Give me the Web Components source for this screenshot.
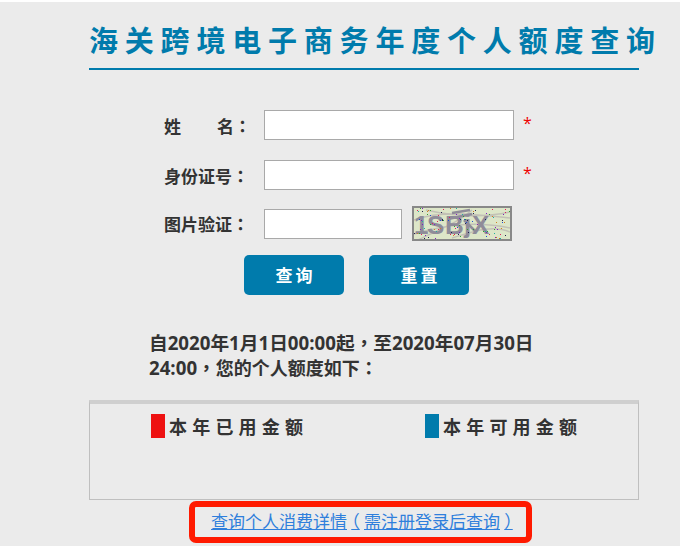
<!DOCTYPE html>
<html lang="zh-CN">
<head>
<meta charset="utf-8">
<title>海关跨境电子商务年度个人额度查询</title>
<style>
  html, body { margin: 0; background: #fff; }
  body { font-family: "Open Sans", "Noto Sans CJK SC", sans-serif; overflow: hidden; text-spacing-trim: space-all; }
  /* centred full-width punctuation */
  .p { font-family: "Noto Sans CJK TC", sans-serif; line-height: 0; }
  .paren { font-feature-settings: "halt"; padding: 0 4.25px; }
</style>
</head>
<body>
<quota-page>
  <page-title>海关跨境电子商务年度个人额度查询</page-title>
  <form-row style="margin-top: 40px">
    <span slot="label">姓<span style="letter-spacing: 1px">&emsp;&emsp;</span>名<span class="p" lang="zh-TW">：</span></span>
    <input-box width="250"></input-box>
    <span slot="mark">*</span>
  </form-row>
  <form-row style="margin-top: 20px">
    <span slot="label">身份证号<span class="p" lang="zh-TW">：</span></span>
    <input-box width="250"></input-box>
    <span slot="mark">*</span>
  </form-row>
  <form-row style="margin-top: 16px">
    <span slot="label">图片验证<span class="p" lang="zh-TW">：</span></span>
    <input-box width="138"></input-box>
    <captcha-image></captcha-image>
  </form-row>
  <button-row>
    <action-button>查询</action-button>
    <action-button>重置</action-button>
  </button-row>
  <date-note>自2020年1月1日00:00起<span class="p" lang="zh-TW">，</span>至2020年07月30日<br>24:00<span class="p" lang="zh-TW">，</span><span style="font-size: 18px">您的个人额度如下<span class="p" lang="zh-TW">：</span></span></date-note>
  <legend-panel>
    <legend-item color="#ee1111">本年已用金额</legend-item>
    <legend-item color="#007bac">本年可用金额</legend-item>
  </legend-panel>
  <detail-link>查询个人消费详情<span class="p paren" lang="zh-TW">（</span>需注册登录后查询<span class="p paren" lang="zh-TW">）</span></detail-link>
</quota-page>

<script>
const define = (name, css, html) => {
  const template = document.createElement('template');
  template.innerHTML = `<style>*{box-sizing:border-box} :host{box-sizing:border-box}${css}</style>${html}`;
  customElements.define(name, class extends HTMLElement {
    constructor() {
      super();
      this.attachShadow({ mode: 'open' });
      this.shadowRoot.appendChild(template.content.cloneNode(true));
    }
  });
};

define('quota-page', `
  :host { display: block; width: 680px; height: 544px; margin-top: 2px; background: #ebebeb; overflow: hidden; color: #333; }
`, `<slot></slot>`);

define('page-title', `
  :host { display: block; width: 550px; height: 68px; margin-left: 89px; border-bottom: 2px solid #007bac;
    padding-top: 19px; font-size: 29px; font-weight: 700; line-height: 40px; letter-spacing: 6.8px;
    color: #007bac; white-space: nowrap; }
`, `<slot></slot>`);

define('form-row', `
  :host { display: flex; align-items: center; padding-left: 164px; }
  #label { width: 100px; font-size: 17px; font-weight: 700; color: #333; white-space: nowrap; }
  #mark { margin-left: 9px; color: #e00; font-size: 16px; margin-top: -4px; }
`, `<span id="label"><slot name="label"></slot></span><slot></slot><span id="mark"><slot name="mark"></slot></span>`);

define('input-box', `
  :host { display: block; height: 30px; background: #fff; border: 1px solid #a9a9a9; }
`, ``);
customElements.whenDefined('input-box').then(() => {
  document.querySelectorAll('input-box').forEach(el => { el.style.width = el.getAttribute('width') + 'px'; });
});

define('captcha-image', `
  :host { display: block; width: 100px; height: 35px; margin-left: 10px; }
  svg { display: block; overflow: visible; }
  text { font: 700 26px "Liberation Sans", sans-serif; fill: #8f8c99; }
`, `<svg width="100" height="35" viewBox="0 0 100 35">
  <rect width="100" height="35" fill="#dde6c8"/>
  <g stroke="#c2c1b6" stroke-width="1.5" fill="none">
    <path d="M2 14C30 4 60 8 98 12M2 28C30 20 60 14 98 22M6 34C30 22 44 18 60 4M40 32C60 26 80 18 98 26M14 4C40 10 70 12 98 6"/>
  </g>
  <text x="2" y="28">1</text>
  <text x="15" y="28">S</text>
  <text x="33" y="28">B</text>
  <text x="52" y="27">j</text>
  <text x="60" y="28">X</text>
  <path d="M36 13L60 8M40 7L58 4M52 14L64 26" stroke="#8f8c99" stroke-width="2.5" fill="none"/>
  <g id="dots"></g>
  <rect x="1" y="1" width="98" height="33" fill="none" stroke="#888" stroke-width="2"/>
</svg>`);

define('button-row', `
  :host { display: flex; gap: 25px; margin-top: 14px; padding-left: 244px; }
`, `<slot></slot>`);

define('action-button', `
  :host { display: flex; align-items: center; justify-content: center; width: 100px; height: 40px; padding: 0 0 2px 3px;
    background: #007bac; border-radius: 5px; color: #fff; font-size: 17px; font-weight: 700; letter-spacing: 3px; }
`, `<slot></slot>`);

define('date-note', `
  :host { display: block; width: 392px; height: 52px; margin: 35px 0 0 149px; font-size: 18.7px; font-weight: 700; line-height: 25px; color: #333; }
`, `<slot></slot>`);

define('legend-panel', `
  :host { display: flex; width: 550px; height: 100px; margin: 18px 0 0 89px; border: 1px solid #bfbfbf; border-top: 4px solid #cfcfcf; padding: 10px 0 0 61px; }
`, `<slot></slot>`);

define('legend-item', `
  :host { display: flex; flex: none; align-items: center; width: 274px; height: 24px; font-size: 18px; font-weight: 700; letter-spacing: 5.2px; color: #333; white-space: nowrap; }
  i { display: block; width: 14px; height: 24px; margin-right: 4px; background: var(--swatch); }
`, `<i></i><slot></slot>`);
customElements.whenDefined('legend-item').then(() => {
  document.querySelectorAll('legend-item').forEach(el => el.style.setProperty('--swatch', el.getAttribute('color')));
});

define('detail-link', `
  :host { display: block; width: 343px; height: 42px; margin: 1px 0 0 189px; border: 6px solid #ff1a00; border-radius: 7px;
    padding-left: 16px; font-size: 17px; line-height: 30px; white-space: nowrap; }
  a { color: #2f7fdc; text-decoration: underline; }
`, `<a href="#"><slot></slot></a>`);

// captcha noise
let seed = 7;
const rnd = n => { seed = (seed * 16807) % 2147483647; return seed % n; };
const dots = document.querySelector('captcha-image').shadowRoot.getElementById('dots');
const colors = ['#e0205a', '#2050d0', '#20b0a0', '#30a030', '#8020c0', '#d08020', '#202050'];
let dotMarkup = '';
for (let i = 0; i < 110; i++) {
  dotMarkup += `<rect x="${rnd(98) + 1}" y="${rnd(33) + 1}" width="1" height="1" fill="${colors[rnd(7)]}"/>`;
}
dots.innerHTML = dotMarkup;
</script>
</body>
</html>
